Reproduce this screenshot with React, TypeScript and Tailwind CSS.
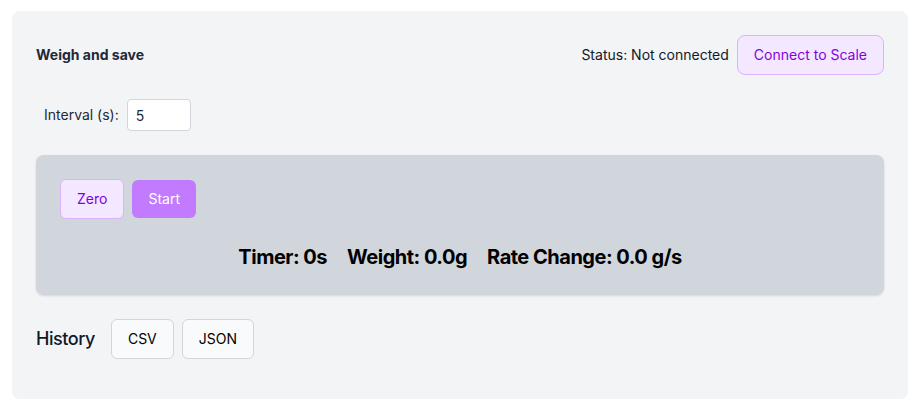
export default function App() {
  return (
    <div className="min-h-screen bg-white pl-3 pt-[11px] font-['Inter',sans-serif]">
      <div className="w-[896px] rounded-lg bg-gray-100 px-6 pt-6 pb-10 flex flex-col gap-6">
        {/* Header */}
        <div className="flex items-center justify-between">
          <h2 className="text-sm font-bold text-gray-800">Weigh and save</h2>
          <div className="flex items-center gap-2">
            <span className="text-sm text-gray-900">Status: Not connected</span>
            <button className="rounded-lg border border-purple-300 bg-purple-100 px-4 py-[9px] text-sm leading-5 text-purple-700">
              Connect to Scale
            </button>
          </div>
        </div>

        {/* Interval */}
        <div className="flex items-center gap-2 pl-2">
          <label className="text-sm text-gray-800">Interval (s):</label>
          <input
            type="number"
            defaultValue={5}
            className="h-8 w-16 rounded border border-gray-300 bg-white px-2 text-sm text-gray-800 outline-none"
          />
        </div>

        {/* Controls panel */}
        <div className="rounded-lg bg-gray-300 p-6 shadow-sm flex flex-col gap-6">
          <div className="flex items-center gap-2">
            <button className="rounded-md border border-purple-300 bg-purple-100 px-4 py-[9px] text-sm leading-5 text-purple-700">
              Zero
            </button>
            <button className="rounded-md bg-purple-400 px-4 py-[9px] text-sm leading-5 text-white">
              Start
            </button>
          </div>
          <div className="flex items-center justify-center gap-5 text-xl font-bold tracking-tight text-black">
            <span>Timer: 0s</span>
            <span>Weight: 0.0g</span>
            <span>Rate Change: 0.0 g/s</span>
          </div>
        </div>

        {/* History */}
        <div className="flex items-center gap-2">
          <h3 className="mr-2 text-lg font-medium tracking-tight text-gray-900">History</h3>
          <button className="rounded-md border border-gray-300 bg-gray-50 px-4 py-[9px] text-sm leading-5 text-black">
            CSV
          </button>
          <button className="rounded-md border border-gray-300 bg-gray-50 px-4 py-[9px] text-sm leading-5 text-black">
            JSON
          </button>
        </div>
      </div>
    </div>
  );
}
